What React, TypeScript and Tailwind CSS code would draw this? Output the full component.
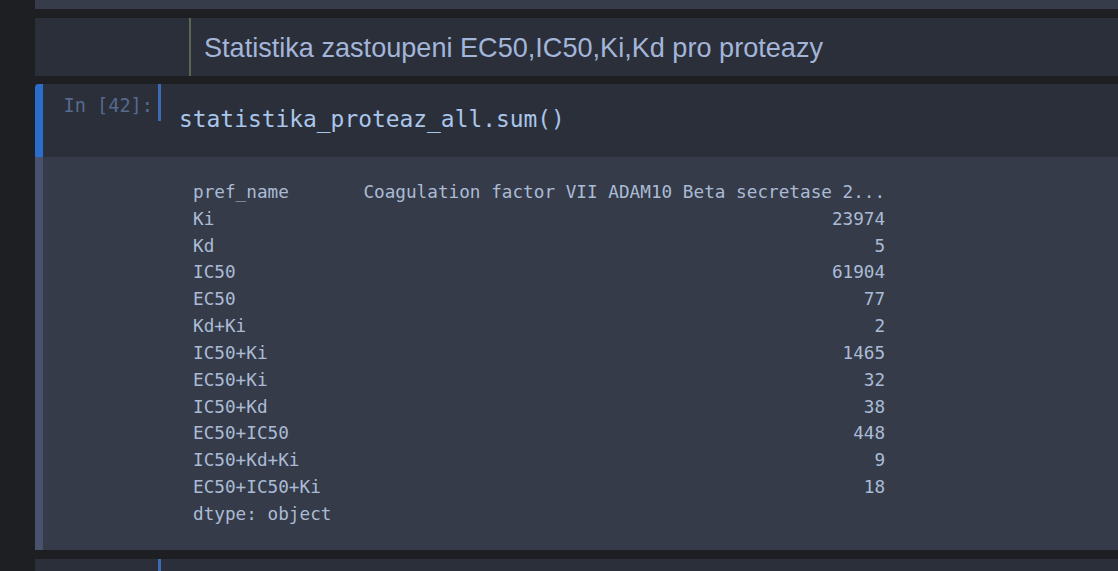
import React from "react";

const mono = { fontFamily: '"DejaVu Sans Mono", monospace' };

const header = "pref_name".padEnd(16) + "Coagulation factor VII ADAM10 Beta secretase 2...";
const rows: [string, string][] = [
  ["Ki", "23974"],
  ["Kd", "5"],
  ["IC50", "61904"],
  ["EC50", "77"],
  ["Kd+Ki", "2"],
  ["IC50+Ki", "1465"],
  ["EC50+Ki", "32"],
  ["IC50+Kd", "38"],
  ["EC50+IC50", "448"],
  ["IC50+Kd+Ki", "9"],
  ["EC50+IC50+Ki", "18"],
];

const lines = [
  header,
  ...rows.map(([k, v]) => k + v.padStart(header.length - k.length)),
  "dtype: object",
];

export default function App() {
  return (
    <div className="w-[1118px] h-[571px] overflow-hidden bg-[#1e1f23] pl-[35px] flex flex-col">
      {/* previous cell tail */}
      <div className="h-[9px] shrink-0 bg-[#363c49]" />
      <div className="h-[9px] shrink-0" />
      {/* markdown cell */}
      <div className="h-[58px] shrink-0 bg-[#2b2f3a] flex">
        <div className="w-[154px] shrink-0" />
        <div className="w-[2px] shrink-0 bg-[#58694f]" />
        <div
          className="pl-[13px] pt-[15px] text-[27.1px] leading-[30px] text-[#a3b5d9] whitespace-pre"
          style={{ fontFamily: '"Liberation Sans", Arial, sans-serif' }}
        >
          Statistika zastoupeni EC50,IC50,Ki,Kd pro proteazy
        </div>
      </div>
      <div className="h-[8px] shrink-0" />
      {/* code cell */}
      <div className="flex flex-col shrink-0">
        <div className="h-[73px] flex bg-[#2b2f3a]">
          <div className="w-[8px] shrink-0 bg-[#2b6dcc] rounded-tl-[4px]" />
          <div
            className="w-[115px] shrink-0 text-right pr-[5px] pt-[11px] text-[18.6px] leading-[22px] text-[#566a8e] whitespace-pre"
            style={mono}
          >
            In [42]:
          </div>
          <div className="w-[3px] h-[37px] shrink-0 bg-[#3b6ab8]" />
          <div
            className="pl-[18px] pt-[22px] text-[22.9px] leading-[27px] text-[#aac6ea] whitespace-pre"
            style={mono}
          >
            statistika_proteaz_all.sum()
          </div>
        </div>
        <div className="h-[393px] flex bg-[#353b48]">
          <div className="w-[8px] shrink-0 bg-[#48526c]" />
          <div
            className="pl-[150px] pt-[22px] text-[17.7px] leading-[26.83px] text-[#abbbd6] whitespace-pre"
            style={mono}
          >
            {lines.map((l, i) => (
              <div key={i}>{l}</div>
            ))}
          </div>
        </div>
      </div>
      <div className="h-[9px] shrink-0" />
      {/* next cell */}
      <div className="flex-1 flex bg-[#2b2f3a]">
        <div className="w-[123px] shrink-0" />
        <div className="w-[3px] h-[37px] shrink-0 bg-[#3b6ab8]" />
      </div>
    </div>
  );
}
